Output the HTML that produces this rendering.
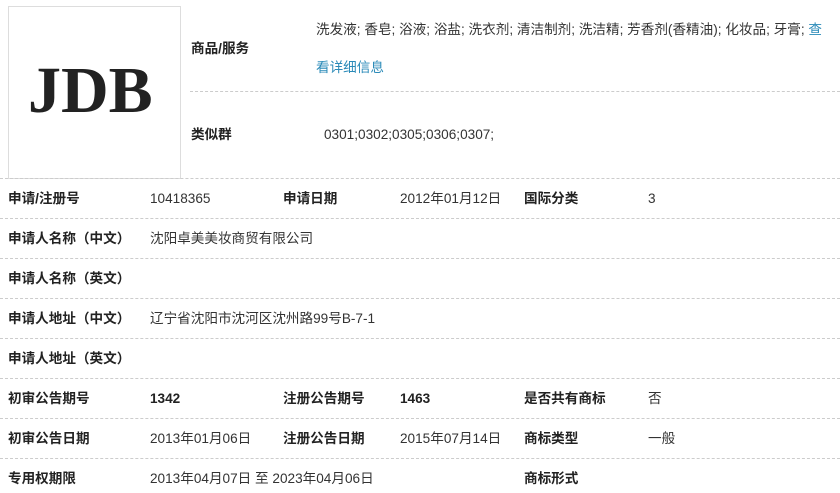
<!DOCTYPE html>
<html><head><meta charset="utf-8"><style>
body{margin:0;width:840px;height:493px;background:#fff;position:relative;overflow:hidden;font-family:"Liberation Sans","Noto Sans CJK SC",sans-serif;font-size:13.6px;color:#333}
.t{position:absolute;white-space:nowrap;line-height:16px}
.b{font-weight:bold;color:#222}
.l{position:absolute;left:0;width:840px;border-top:1px dashed #ccc}
.box{position:absolute;left:8px;top:6px;width:171px;height:171px;border:1px solid #ddd}
.logo{position:absolute;left:28px;top:58px;font-family:"Liberation Serif",serif;font-weight:bold;font-size:66px;letter-spacing:0px;color:#222;line-height:66px}
a{color:#2a8ab8;text-decoration:none}
</style></head><body>
<div class="box"></div>
<div class="logo">JDB</div>
<div class="t b" style="left:191px;top:41px">商品/服务</div>
<div class="t" style="left:316px;top:22px">洗发液; 香皂; 浴液; 浴盐; 洗衣剂; 清洁制剂; 洗洁精; 芳香剂(香精油); 化妆品; 牙膏; <a>查</a></div>
<div class="t" style="left:316px;top:60px"><a>看详细信息</a></div>
<div class="l" style="left:190px;width:650px;top:91px"></div>
<div class="t b" style="left:191px;top:127px">类似群</div>
<div class="t" style="left:324px;top:127px">0301;0302;0305;0306;0307;</div>
<div class="l" style="top:178px"></div>
<div class="t b" style="left:8px;top:191px">申请/注册号</div>
<div class="t" style="left:150px;top:191px">10418365</div>
<div class="t b" style="left:283px;top:191px">申请日期</div>
<div class="t" style="left:400px;top:191px">2012年01月12日</div>
<div class="t b" style="left:524px;top:191px">国际分类</div>
<div class="t" style="left:648px;top:191px">3</div>
<div class="l" style="top:218px"></div>
<div class="t b" style="left:8px;top:231px">申请人名称（中文）</div>
<div class="t" style="left:150px;top:231px">沈阳卓美美妆商贸有限公司</div>
<div class="l" style="top:258px"></div>
<div class="t b" style="left:8px;top:271px">申请人名称（英文）</div>
<div class="l" style="top:298px"></div>
<div class="t b" style="left:8px;top:311px">申请人地址（中文）</div>
<div class="t" style="left:150px;top:311px">辽宁省沈阳市沈河区沈州路99号B-7-1</div>
<div class="l" style="top:338px"></div>
<div class="t b" style="left:8px;top:351px">申请人地址（英文）</div>
<div class="l" style="top:378px"></div>
<div class="t b" style="left:8px;top:391px">初审公告期号</div>
<div class="t b" style="left:150px;top:391px">1342</div>
<div class="t b" style="left:283px;top:391px">注册公告期号</div>
<div class="t b" style="left:400px;top:391px">1463</div>
<div class="t b" style="left:524px;top:391px">是否共有商标</div>
<div class="t" style="left:648px;top:391px">否</div>
<div class="l" style="top:418px"></div>
<div class="t b" style="left:8px;top:431px">初审公告日期</div>
<div class="t" style="left:150px;top:431px">2013年01月06日</div>
<div class="t b" style="left:283px;top:431px">注册公告日期</div>
<div class="t" style="left:400px;top:431px">2015年07月14日</div>
<div class="t b" style="left:524px;top:431px">商标类型</div>
<div class="t" style="left:648px;top:431px">一般</div>
<div class="l" style="top:458px"></div>
<div class="t b" style="left:8px;top:471px">专用权期限</div>
<div class="t" style="left:150px;top:471px">2013年04月07日 至 2023年04月06日</div>
<div class="t b" style="left:524px;top:471px">商标形式</div>
</body></html>
